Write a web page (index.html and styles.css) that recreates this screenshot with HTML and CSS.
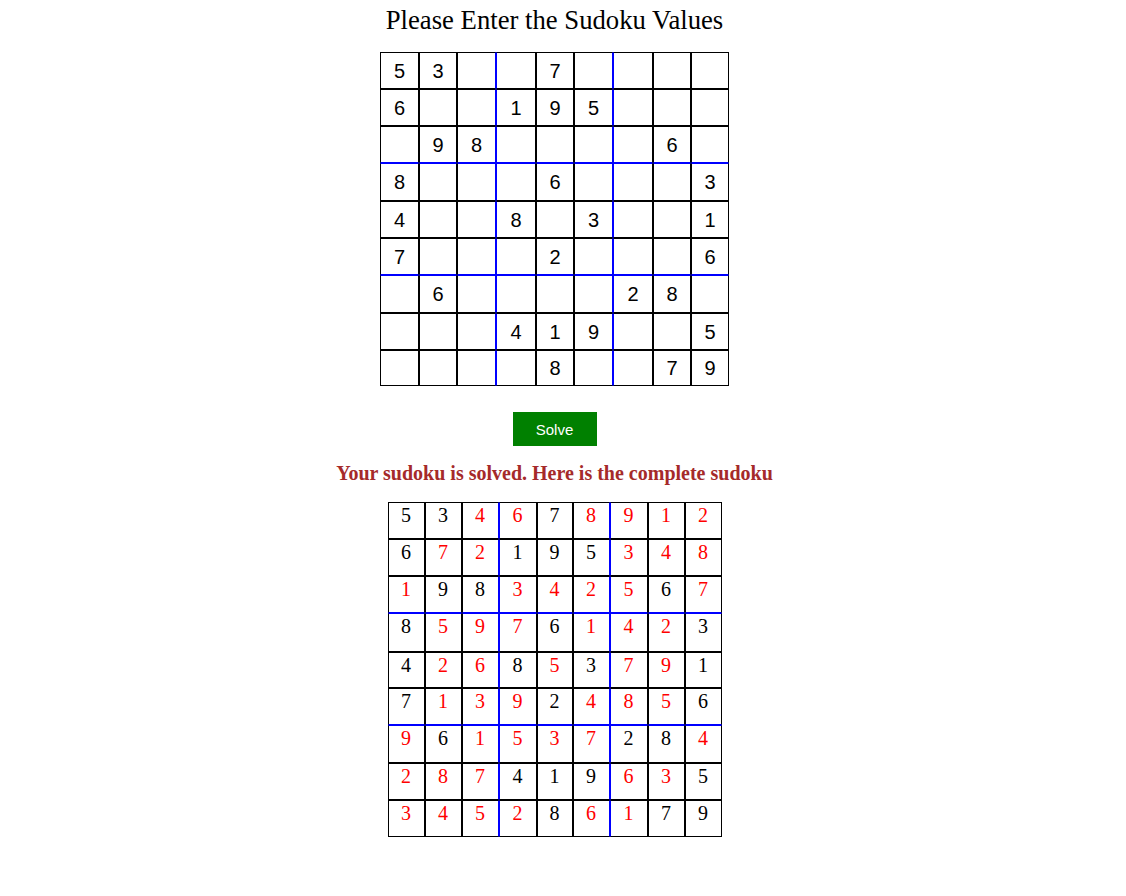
FILE: index.html
```html
<!DOCTYPE html>
<html>
<head>
<meta charset="utf-8">
<title>Sudoku Solver</title>
<link rel="stylesheet" href="styles.css">
</head>
<body>
<div class="page">
  <h1 class="title">Please Enter the Sudoku Values</h1>
  <div class="board input-board">
    <div class="cell">5</div><div class="cell">3</div><div class="cell"></div><div class="cell"></div><div class="cell">7</div><div class="cell"></div><div class="cell"></div><div class="cell"></div><div class="cell"></div>
    <div class="cell">6</div><div class="cell"></div><div class="cell"></div><div class="cell">1</div><div class="cell">9</div><div class="cell">5</div><div class="cell"></div><div class="cell"></div><div class="cell"></div>
    <div class="cell"></div><div class="cell">9</div><div class="cell">8</div><div class="cell"></div><div class="cell"></div><div class="cell"></div><div class="cell"></div><div class="cell">6</div><div class="cell"></div>
    <div class="cell">8</div><div class="cell"></div><div class="cell"></div><div class="cell"></div><div class="cell">6</div><div class="cell"></div><div class="cell"></div><div class="cell"></div><div class="cell">3</div>
    <div class="cell">4</div><div class="cell"></div><div class="cell"></div><div class="cell">8</div><div class="cell"></div><div class="cell">3</div><div class="cell"></div><div class="cell"></div><div class="cell">1</div>
    <div class="cell">7</div><div class="cell"></div><div class="cell"></div><div class="cell"></div><div class="cell">2</div><div class="cell"></div><div class="cell"></div><div class="cell"></div><div class="cell">6</div>
    <div class="cell"></div><div class="cell">6</div><div class="cell"></div><div class="cell"></div><div class="cell"></div><div class="cell"></div><div class="cell">2</div><div class="cell">8</div><div class="cell"></div>
    <div class="cell"></div><div class="cell"></div><div class="cell"></div><div class="cell">4</div><div class="cell">1</div><div class="cell">9</div><div class="cell"></div><div class="cell"></div><div class="cell">5</div>
    <div class="cell"></div><div class="cell"></div><div class="cell"></div><div class="cell"></div><div class="cell">8</div><div class="cell"></div><div class="cell"></div><div class="cell">7</div><div class="cell">9</div>
  </div>
  <button class="solve-btn">Solve</button>
  <h3 class="message">Your sudoku is solved. Here is the complete sudoku</h3>
  <div class="board result-board">
    <div class="cell">5</div><div class="cell">3</div><div class="cell s">4</div><div class="cell s">6</div><div class="cell">7</div><div class="cell s">8</div><div class="cell s">9</div><div class="cell s">1</div><div class="cell s">2</div>
    <div class="cell">6</div><div class="cell s">7</div><div class="cell s">2</div><div class="cell">1</div><div class="cell">9</div><div class="cell">5</div><div class="cell s">3</div><div class="cell s">4</div><div class="cell s">8</div>
    <div class="cell s">1</div><div class="cell">9</div><div class="cell">8</div><div class="cell s">3</div><div class="cell s">4</div><div class="cell s">2</div><div class="cell s">5</div><div class="cell">6</div><div class="cell s">7</div>
    <div class="cell">8</div><div class="cell s">5</div><div class="cell s">9</div><div class="cell s">7</div><div class="cell">6</div><div class="cell s">1</div><div class="cell s">4</div><div class="cell s">2</div><div class="cell">3</div>
    <div class="cell">4</div><div class="cell s">2</div><div class="cell s">6</div><div class="cell">8</div><div class="cell s">5</div><div class="cell">3</div><div class="cell s">7</div><div class="cell s">9</div><div class="cell">1</div>
    <div class="cell">7</div><div class="cell s">1</div><div class="cell s">3</div><div class="cell s">9</div><div class="cell">2</div><div class="cell s">4</div><div class="cell s">8</div><div class="cell s">5</div><div class="cell">6</div>
    <div class="cell s">9</div><div class="cell">6</div><div class="cell s">1</div><div class="cell s">5</div><div class="cell s">3</div><div class="cell s">7</div><div class="cell">2</div><div class="cell">8</div><div class="cell s">4</div>
    <div class="cell s">2</div><div class="cell s">8</div><div class="cell s">7</div><div class="cell">4</div><div class="cell">1</div><div class="cell">9</div><div class="cell s">6</div><div class="cell s">3</div><div class="cell">5</div>
    <div class="cell s">3</div><div class="cell s">4</div><div class="cell s">5</div><div class="cell s">2</div><div class="cell">8</div><div class="cell s">6</div><div class="cell s">1</div><div class="cell">7</div><div class="cell">9</div>
  </div>
</div>
</body>
</html>
```

FILE: styles.css
```css
html, body {
  margin: 0;
  padding: 0;
  background: #ffffff;
}

.page {
  width: 1109px;
  padding-top: 6px;
  display: flex;
  flex-direction: column;
  align-items: center;
  font-family: "Liberation Serif", "Times New Roman", serif;
  color: #000;
}

.title {
  margin: 0;
  font-size: 26.7px;
  font-weight: normal;
  line-height: 29px;
}

.board {
  display: grid;
}

.board .cell {
  box-sizing: border-box;
  border: 1px solid #000;
  font-size: 20px;
}

.board .cell:nth-child(9n+3),
.board .cell:nth-child(9n+6) {
  border-right-color: #0000ff;
}

.board .cell:nth-child(9n+4),
.board .cell:nth-child(9n+7) {
  border-left-color: #0000ff;
}

.board .cell:nth-child(n+19):nth-child(-n+27),
.board .cell:nth-child(n+46):nth-child(-n+54) {
  border-bottom-color: #0000ff;
}

.board .cell:nth-child(n+28):nth-child(-n+36),
.board .cell:nth-child(n+55):nth-child(-n+63) {
  border-top-color: #0000ff;
}

.input-board {
  margin-top: 17px;
  grid-template-columns: 39px 38px 39px 40px 38px 39px 40px 38px 38px;
  grid-template-rows: 37px 37px 37px 38px 37px 37px 38px 37px 36px;
}

.input-board .cell {
  font-family: "Liberation Sans", Arial, sans-serif;
  display: flex;
  align-items: center;
  justify-content: center;
  line-height: 1;
}

.solve-btn {
  margin-top: 26px;
  width: 84px;
  height: 34px;
  border: none;
  background: #008000;
  color: #ffffff;
  font-family: "Liberation Sans", Arial, sans-serif;
  font-size: 15px;
  padding: 0;
}

.message {
  margin: 16px 0 0;
  font-size: 20px;
  font-weight: bold;
  line-height: 23px;
  color: #a52a2a;
}

.result-board {
  margin-top: 17px;
  grid-template-columns: 37px 37px 37px 38px 36px 37px 38px 37px 37px;
  grid-template-rows: 37px 37px 37px 39px 36px 37px 38px 37px 37px;
}

.result-board .cell {
  text-align: center;
  line-height: 23px;
  padding-top: 1px;
  color: #000;
}

.result-board .cell.s {
  color: #ff0000;
}
```
